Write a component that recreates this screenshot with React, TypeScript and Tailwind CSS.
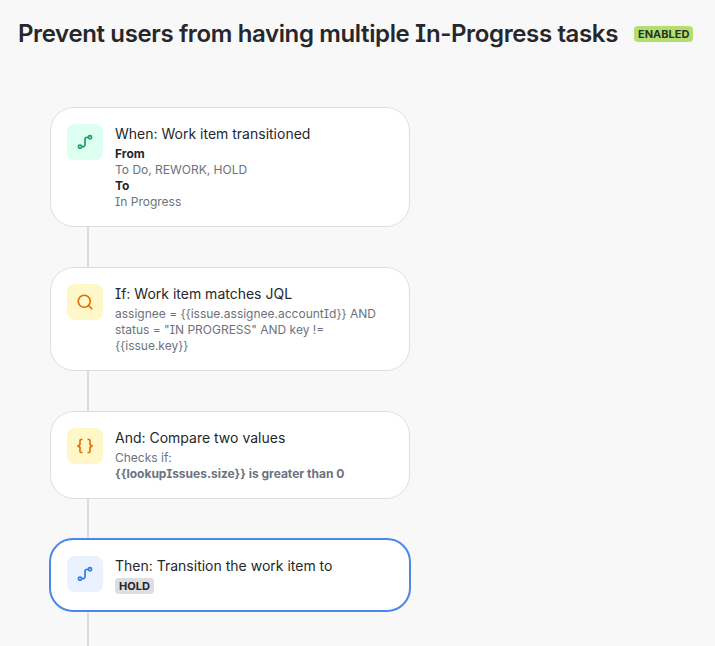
import { Search } from "lucide-react";
import type { ReactNode } from "react";

interface StepProps {
  icon: ReactNode;
  iconBg: string;
  title: string;
  active?: boolean;
  children: ReactNode;
}

function RouteIcon({ className }: { className: string }) {
  return (
    <svg viewBox="0 0 24 24" width="16" height="16" fill="none" stroke="currentColor" strokeWidth="2.6" className={className}>
      <circle cx="4.5" cy="19" r="2.4" />
      <circle cx="19.5" cy="5" r="2.4" />
      <path d="M7 19h2a3 3 0 0 0 3-3V8a3 3 0 0 1 3-3h2" />
    </svg>
  );
}

function BracesIcon({ className }: { className: string }) {
  return (
    <svg viewBox="0 0 16 16" width="16" height="16" fill="none" stroke="currentColor" strokeWidth="1.6" className={className}>
      <path d="M5.5 1.5H4a1 1 0 0 0-1 1V6.5L1 8l2 1.5v4a1 1 0 0 0 1 1h1.5" />
      <path d="M10.5 1.5H12a1 1 0 0 1 1 1V6.5L15 8l-2 1.5v4a1 1 0 0 1-1 1h-1.5" />
    </svg>
  );
}

function Step({ icon, iconBg, title, active, children }: StepProps) {
  return (
    <div
      className={
        active
          ? "relative z-10 flex w-[362px] -ml-px gap-3 rounded-[24px] border-2 border-[#4a88e8] bg-white p-4"
          : "relative z-10 flex w-[360px] gap-3 rounded-[24px] border border-[#dedfe1] bg-white p-4"
      }
    >
      <div className={`flex h-9 w-9 shrink-0 items-center justify-center rounded-lg ${iconBg}`}>{icon}</div>
      <div className="min-w-0 flex-1">
        <div className="mb-0.5 text-sm leading-5 text-[#25272b]">{title}</div>
        <div className="text-xs leading-4 text-[#6b7280]">{children}</div>
      </div>
    </div>
  );
}

function Connector({ className }: { className: string }) {
  return <div className={`ml-[37px] w-0.5 bg-[#dcdcde] ${className}`} />;
}

export default function App() {
  return (
    <div className="h-[646px] w-[715px] overflow-hidden bg-[#f8f8f8] font-['Inter',sans-serif] [font-feature-settings:'cv08']">
      {/* Header */}
      <div className="flex items-center pl-[18px] pt-[18px]">
        <h1 className="whitespace-nowrap text-2xl leading-8 font-semibold tracking-[-0.37px] text-[#25272b]">
          Prevent users from having multiple In-Progress tasks
        </h1>
        <span className="ml-4 rounded bg-[#b3df72] px-1 text-[11px] leading-4 font-bold text-[#2a3320]">
          ENABLED
        </span>
      </div>

      {/* Flow */}
      <div className="ml-[50px] mt-[57px] flex flex-col">
        <Step icon={<RouteIcon className="text-[#22a06b]" />} iconBg="bg-[#dcfff1]" title="When: Work item transitioned">
          <div className="font-bold text-[#25272b]">From</div>
          <div>To Do, REWORK, HOLD</div>
          <div className="font-bold text-[#25272b]">To</div>
          <div>In Progress</div>
        </Step>
        <Connector className="h-10" />
        <Step icon={<Search size={18} strokeWidth={2.2} className="text-[#d97008]" />} iconBg="bg-[#fff7c7]" title="If: Work item matches JQL">
          assignee = {"{{issue.assignee.accountId}}"} AND status = "IN PROGRESS" AND key != {"{{issue.key}}"}
        </Step>
        <Connector className="h-10" />
        <Step icon={<BracesIcon className="text-[#d97008]" />} iconBg="bg-[#fff7c7]" title="And: Compare two values">
          <div>Checks if:</div>
          <div className="font-bold">{"{{lookupIssues.size}}"} is greater than 0</div>
        </Step>
        <Connector className="h-[39px]" />
        <Step active icon={<RouteIcon className="text-[#357de8]" />} iconBg="bg-[#e9f2fe]" title="Then: Transition the work item to">
          <span className="block w-fit rounded bg-[#dddee1] px-1 text-[11px] leading-4 font-bold text-[#25272b]">HOLD</span>
        </Step>
        <Connector className="h-10" />
      </div>
    </div>
  );
}
